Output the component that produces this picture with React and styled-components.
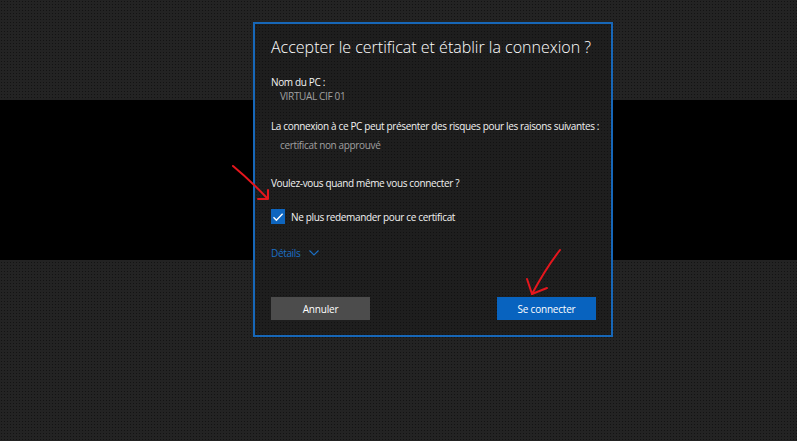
import styled, { createGlobalStyle } from "styled-components";

const GlobalStyle = createGlobalStyle`
  html, body {
    margin: 0;
    padding: 0;
    background: #222222;
  }
  * {
    box-sizing: border-box;
  }
`;

const App = () => {
  return (
    <>
      <GlobalStyle />
      <Stage>
        <Dialog>
          <Title>Accepter le certificat et établir la connexion ?</Title>

          <Label>Nom du PC :</Label>
          <Value>VIRTUAL CIF 01</Value>

          <Label $top={16}>
            La connexion à ce PC peut présenter des risques pour les raisons
            suivantes :
          </Label>
          <Value $top={5}>certificat non approuvé</Value>

          <Label $top={24}>Voulez-vous quand même vous connecter ?</Label>

          <CheckRow>
            <CheckBox>
              <svg width="12" height="12" viewBox="0 0 12 12">
                <path
                  d="M1.5 6.3 L4.4 9.2 L10.6 2.8"
                  fill="none"
                  stroke="#fff"
                  strokeWidth="1.4"
                />
              </svg>
            </CheckBox>
            <span>Ne plus redemander pour ce certificat</span>
          </CheckRow>

          <Details>
            Détails
            <svg width="10" height="6" viewBox="0 0 10 6">
              <path
                d="M0.5 0.5 L5 5 L9.5 0.5"
                fill="none"
                stroke="currentColor"
                strokeWidth="1.1"
              />
            </svg>
          </Details>

          <Buttons>
            <Button type="button">Annuler</Button>
            <Button type="button" $primary>
              Se connecter
            </Button>
          </Buttons>
        </Dialog>

        <Annotations viewBox="0 0 797 441" width="797" height="441">
          <g
            fill="none"
            stroke="#e5161d"
            strokeWidth="2"
            strokeLinecap="round"
            strokeLinejoin="round"
          >
            <path d="M233 166 Q251 181 267 198" />
            <path d="M258 199 L268 199 L268 190" />
            <path d="M560 250 Q546 268 532 294" />
            <path d="M527 279 L532 294 L547 288" />
          </g>
        </Annotations>
      </Stage>
    </>
  );
};

export default App;

const Stage = styled.div`
  position: relative;
  width: 797px;
  height: 441px;
  overflow: hidden;
  padding: 22px 0 0 253px;

  background-color: #232323;
  background-image: linear-gradient(
      to bottom,
      transparent 100px,
      #000 100px,
      #000 260px,
      transparent 260px
    ),
    radial-gradient(rgba(0, 0, 0, 0.45) 0.7px, transparent 0.9px);
  background-size: 100% 100%, 3px 3px;
`;

const Dialog = styled.section`
  display: flex;
  flex-direction: column;

  width: 360px;
  height: 315px;
  padding: 11px 15px 15px 16px;

  background-color: #1e1e1e;
  background-image: radial-gradient(
    rgba(0, 0, 0, 0.4) 0.7px,
    transparent 0.9px
  );
  background-size: 3px 3px;
  border: 2px solid #1767b8;

  font-family: "Open Sans", "Noto Sans", sans-serif;
  letter-spacing: -0.35px;
  color: #ffffff;
`;

const Title = styled.h1`
  margin: 0 0 16px;

  font-size: 16px;
  font-weight: 300;
  line-height: 24px;
  letter-spacing: 0;
  white-space: nowrap;
`;

const Label = styled.div`
  margin-top: ${({ $top }) => $top || 0}px;

  font-size: 10px;
  line-height: 14px;
  white-space: nowrap;
  color: #f2f2f2;
`;

const Value = styled.div`
  margin-top: ${({ $top }) => $top || 0}px;
  padding-left: 9px;

  font-size: 10px;
  line-height: 14px;
  color: #a0a0a0;
`;

const CheckRow = styled.label`
  display: flex;
  align-items: center;
  gap: 6px;

  margin-top: 19px;
  height: 15px;

  font-size: 10px;
  color: #f2f2f2;
`;

const CheckBox = styled.span`
  display: flex;
  align-items: center;
  justify-content: center;

  width: 14px;
  height: 15px;

  background: #0e65be;
`;

const Details = styled.div`
  display: flex;
  align-items: center;
  gap: 9px;

  margin-top: 22px;
  height: 14px;

  font-size: 10px;
  color: #1c6fc4;
`;

const Buttons = styled.div`
  display: flex;
  justify-content: space-between;

  margin-top: auto;
`;

const Button = styled.button`
  width: 99px;
  height: 23px;
  padding: 0;

  font-family: "Open Sans", "Noto Sans", sans-serif;
  font-size: 10px;
  letter-spacing: -0.2px;
  color: #ffffff;

  background: ${({ $primary }) => ($primary ? "#0863bf" : "#4c4c4c")};
  border: 0;
`;

const Annotations = styled.svg`
  position: absolute;
  top: 0;
  left: 0;
  pointer-events: none;
`;
